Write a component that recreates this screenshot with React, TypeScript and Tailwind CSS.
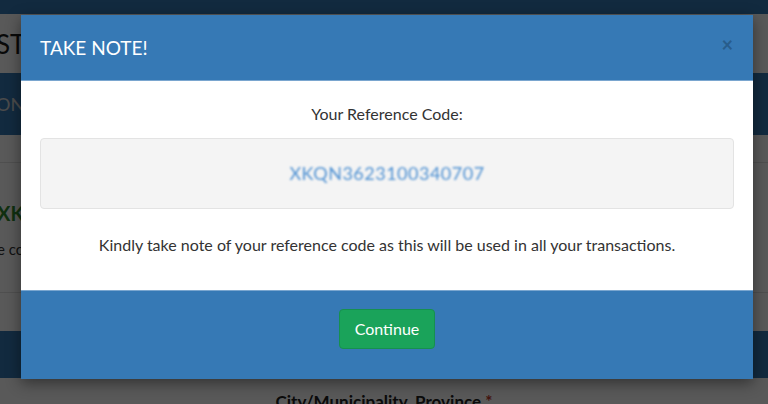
export default function App() {
  return (
    <div className="relative h-[404px] w-[768px] overflow-hidden bg-white font-['Lato',sans-serif] text-[#333]">
      {/* page behind the modal */}
      <div className="h-[14px] bg-[#3679b5]" />
      <div className="flex h-[59px] items-center overflow-hidden">
        <span className="-ml-[4px] text-[26px] leading-none text-[#1a1a1a]">STI</span>
      </div>
      <div className="flex h-[62px] items-center overflow-hidden bg-[#3679b5]">
        <span className="-ml-[4px] text-[18px] text-[#d8d8d8]">ON</span>
      </div>
      <div className="h-[28px] border-b border-[#e2e2e2]" />
      <div className="h-[130px] border-b border-[#e2e2e2] pt-[38px]">
        <div className="-ml-[3px] text-[20px] font-bold leading-[24px] text-[#2e8a2e]">XK</div>
        <div className="mt-[13px] -ml-[3px] text-[15px] text-[#333]">e co</div>
      </div>
      <div className="h-[38px]" />
      <div className="h-[47px] bg-[#3679b5]" />
      <div className="mt-[14px] text-center text-[17px] font-bold leading-[20px] text-[#222]">
        City/Municipality, Province <span className="text-[#c0392b]">*</span>
      </div>

      {/* overlay */}
      <div className="absolute inset-0 bg-black/65" />

      {/* modal */}
      <div className="absolute left-[21px] top-[15px] w-[732px] shadow-[0_4px_14px_rgba(0,0,0,0.45)]">
        <div className="flex h-[66px] items-center justify-between border-b border-[#7aa6cf] bg-[#3679b5] pl-[19px] pr-[20px]">
          <h4 className="text-[19px] leading-none text-white">TAKE NOTE!</h4>
          <span className="-mt-[8px] text-[20px] font-bold leading-none text-[#285d8c]">×</span>
        </div>
        <div className="bg-white px-[19px] pb-[33px] pt-[22px] text-center">
          <p className="text-[16px] leading-[22px] text-[#333]">Your Reference Code:</p>
          <div className="mt-[13px] flex h-[71px] items-center justify-center rounded-[4px] border border-[#e3e3e3] bg-[#f4f4f4]">
            <span className="text-[18px] tracking-[0.5px] text-[#4f91d2] blur-[0.9px]">XKQN3623100340707</span>
          </div>
          <p className="mt-[24px] text-[16px] leading-[24px] text-[#333]">
            Kindly take note of your reference code as this will be used in all your transactions.
          </p>
        </div>
        <div className="flex justify-center border-t border-[#7aa6cf] bg-[#3679b5] pb-[30px] pt-[18px]">
          <button className="h-[40px] w-[96px] rounded-[4px] border border-[#16904f] bg-[#1aa35a] text-[16px] text-white">
            Continue
          </button>
        </div>
      </div>
    </div>
  );
}
